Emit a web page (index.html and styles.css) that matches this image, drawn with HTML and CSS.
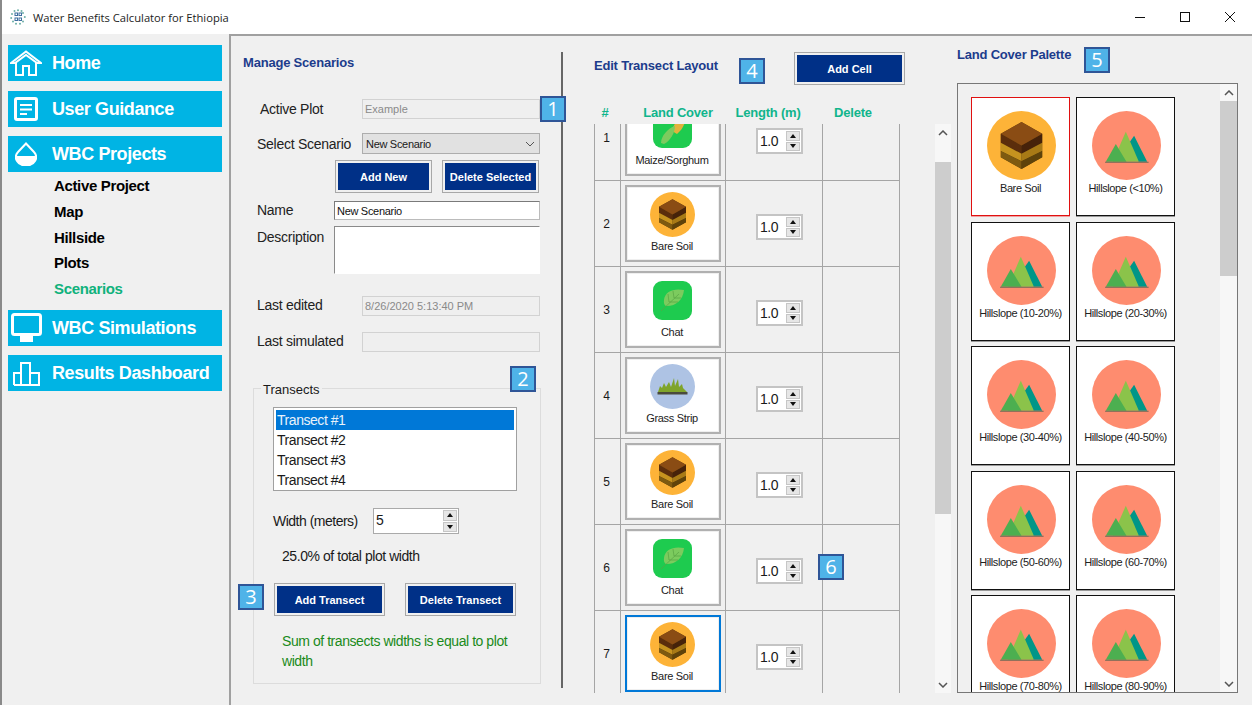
FILE: index.html
```html
<!DOCTYPE html>
<html lang="en">

<head>
    <meta charset="UTF-8">
    <title>Water Benefits Calculator for Ethiopia</title>
    <link rel="stylesheet" href="styles.css">
</head>

<body>
    <svg class="defs" width="0" height="0">
        <symbol id="soil" viewBox="0 0 100 100">
            <circle cx="50" cy="50" r="50" fill="#fdb338" />
            <path d="M50 16 80 33 80 67 50 84 20 67 20 33Z" fill="#5c3d0a" />
            <path d="M20 33 50 50 50 62 20 46Z" fill="#5b2d0c" />
            <path d="M80 33 50 50 50 62 80 46Z" fill="#46220a" />
            <path d="M20 46 50 62 50 73 20 58Z" fill="#c6931f" />
            <path d="M80 46 50 62 50 73 80 58Z" fill="#a87a16" />
            <path d="M20 58 50 73 50 84 20 67Z" fill="#7e5a10" />
            <path d="M80 58 50 73 50 84 80 67Z" fill="#5f430a" />
            <path d="M50 16 80 33 50 50 20 33Z" fill="#8a4c14" />
        </symbol>
        <symbol id="hill" viewBox="0 0 100 100">
            <circle cx="50" cy="50" r="50" fill="#fe8c6f" />
            <path d="M61 36 80 73.5 67 73.5 54 46Z" fill="#009688" />
            <path d="M49 30 68 73.5 30 73.5Z" fill="#8bc34a" />
            <path d="M34.500 48 50 73.500 20 73.500Z" fill="#4caf50" />
            <rect x="19" y="73.500" width="63" height="1.600" fill="#7b6b58" />
        </symbol>
        <symbol id="leaf" viewBox="0 0 45 45">
            <rect x="3" y="3" width="39" height="39" rx="9" fill="#1ecb4f" />
            <path d="M34 12C24 10 15 13 14 22 13.500 26 15 28 17 28 26 28 33 22 34 12Z" fill="#7ccb5e" />
            <path d="M11 33 29 16M19 24 18 16M19 24 28 24M24 20 23 13M24 20 31 20" fill="none" stroke="#58a544" stroke-width=".7" />
        </symbol>
        <symbol id="corn" viewBox="0 0 45 45">
            <rect x="3" y="3" width="39" height="39" rx="9" fill="#1ecb4f" />
            <path d="M22 25C24 17 29 11 35 8 37 15 33 23 27 28Z" fill="#e2b23c" />
            <path d="M11 37C11 30 18 22 25 20 25 27 20 35 14 38Z" fill="#7ccb5e" />
        </symbol>
        <symbol id="grass" viewBox="0 0 45 45">
            <circle cx="22.500" cy="22.500" r="22.500" fill="#aec3e4" />
            <path d="M8 28 10 22 12 24 14 19 16 23 19 18 21 23 24 14 25 22 28 15 29 23 32 20 33 24 37 28Z" fill="#7fa42a" />
            <rect x="7.500" y="28" width="30" height="2.500" fill="#4a4a3c" />
        </symbol>
    </svg>

    <header class="titlebar">
        <svg class="app-icon" viewBox="0 0 16 16">
            <g fill="none" stroke="#3f6f9f" stroke-width="1">
                <rect x="5" y="4" width="2.500" height="2.500" />
                <rect x="9" y="4" width="2.500" height="2.500" />
                <rect x="5" y="9" width="2.500" height="2.500" />
                <rect x="9" y="9" width="2.500" height="2.500" />
            </g>
            <g fill="#6fb0a8">
                <circle cx="2" cy="5" r="1" />
                <circle cx="1.200" cy="9" r="1" />
                <circle cx="3" cy="12.500" r="1" />
                <circle cx="6" cy="14.800" r="1" />
                <circle cx="10" cy="14.800" r="1" />
                <circle cx="13" cy="12.500" r="1" />
                <circle cx="14.800" cy="8" r="1" />
                <circle cx="13" cy="4" r="1" />
                <circle cx="8" cy="1.200" r="1" />
                <circle cx="4.500" cy="2" r="1" />
                <circle cx="11.500" cy="2" r="1" />
            </g>
        </svg>
        <span class="app-title">Water Benefits Calculator for Ethiopia</span>
        <div class="win-controls">
            <svg viewBox="0 0 12 12"><path d="M1 6.500H11" stroke="#111" fill="none" /></svg>
            <svg viewBox="0 0 12 12"><rect x="1.500" y="1.500" width="9" height="9" stroke="#111" fill="none" /></svg>
            <svg viewBox="0 0 12 12"><path d="M1 1 11 11M11 1 1 11" stroke="#111" fill="none" /></svg>
        </div>
    </header>

    <div class="app">
        <nav class="sidebar">
            <a class="nav-item">
                <span class="nav-icon">
                    <svg width="32" height="26" viewBox="0 0 32 26" fill="none" stroke="#fff" stroke-width="2">
                        <path d="M1 13 16 1.500 31 13 27 13 16 5 5 13Z" />
                        <path d="M6 13V25H13V16H19V25H26V13" />
                    </svg>
                </span>
                Home
            </a>
            <a class="nav-item">
                <span class="nav-icon">
                    <svg width="24" height="24" viewBox="0 0 24 24" fill="none" stroke="#fff" stroke-width="3">
                        <rect x="1.500" y="1.500" width="21" height="21" rx="1.500" />
                        <path d="M6 8H18M6 12.500H18M6 17H13" stroke-width="2" />
                    </svg>
                </span>
                User Guidance
            </a>
            <a class="nav-item">
                <span class="nav-icon">
                    <svg width="22" height="24" viewBox="0 0 22 24">
                        <path d="M11 1.500 3 10C0 13 0.500 17 2 19 4 22.500 7 23.500 11 23.500 15 23.500 18 22.500 20 19 21.500 17 22 13 19 10Z" fill="none" stroke="#fff" stroke-width="2" />
                        <path d="M1 14H21C21.500 19 17 24 11 24 5 24 .5 19 1 14Z" fill="#fff" />
                    </svg>
                </span>
                WBC Projects
            </a>
            <ul class="subnav">
                <li>Active Project</li>
                <li>Map</li>
                <li>Hillside</li>
                <li>Plots</li>
                <li class="current">Scenarios</li>
            </ul>
            <a class="nav-item">
                <span class="nav-icon">
                    <svg width="31" height="29" viewBox="0 0 31 29">
                        <rect x="1.500" y="1.500" width="28" height="20" rx="2" fill="none" stroke="#fff" stroke-width="3" />
                        <rect x="9" y="23" width="13" height="6" fill="#fff" />
                    </svg>
                </span>
                WBC Simulations
            </a>
            <a class="nav-item">
                <span class="nav-icon">
                    <svg width="27" height="25" viewBox="0 0 27 25" fill="none" stroke="#fff" stroke-width="2">
                        <path d="M1 24V12H8V24M8 24V2H17V24M17 24V12H26V24H1" />
                    </svg>
                </span>
                Results Dashboard
            </a>
        </nav>

        <main class="workspace">
            <section class="scenarios">
                <h2 class="pane-title scenarios-title">Manage Scenarios</h2>

                <div class="row row-plot">
                    <label class="label label-wide label-indent">Active Plot</label>
                    <div class="input input-off">Example</div>
                </div>
                <div class="row row-select">
                    <label class="label label-wide">Select Scenario</label>
                    <div class="select">New Scenario
                        <svg width="10" height="6" viewBox="0 0 10 6"><path d="M1 1 5 5 9 1" fill="none" stroke="#555" /></svg>
                    </div>
                </div>
                <div class="row row-actions">
                    <button class="btn btn-small">Add New</button>
                    <button class="btn btn-small">Delete Selected</button>
                </div>
                <div class="row row-name">
                    <label class="label label-narrow">Name</label>
                    <div class="input input-edit">New Scenario</div>
                </div>
                <div class="row row-desc">
                    <label class="label label-narrow">Description</label>
                    <div class="input input-edit input-area"></div>
                </div>
                <div class="row row-edited">
                    <label class="label label-wide">Last edited</label>
                    <div class="input input-off">8/26/2020 5:13:40 PM</div>
                </div>
                <div class="row row-simulated">
                    <label class="label label-wide">Last simulated</label>
                    <div class="input input-off"></div>
                </div>

                <div class="group">
                    <span class="group-title">Transects</span>
                    <ul class="listbox">
                        <li class="selected">Transect #1</li>
                        <li>Transect #2</li>
                        <li>Transect #3</li>
                        <li>Transect #4</li>
                    </ul>
                    <div class="width-row">
                        <span class="width-label">Width (meters)</span>
                        <div class="spinner spinner-wide">
                            <span class="spinner-value">5</span>
                            <span class="spinner-btns"><i class="up"></i><i class="down"></i></span>
                        </div>
                    </div>
                    <p class="share">25.0% of total plot width</p>
                    <div class="group-actions">
                        <button class="btn btn-large">Add Transect</button>
                        <button class="btn btn-large">Delete Transect</button>
                    </div>
                    <p class="status">Sum of transects widths is equal to plot width</p>
                </div>
            </section>

            <div class="divider"></div>

            <section class="layout">
                <div class="layout-head">
                    <h2 class="pane-title layout-title">Edit Transect Layout</h2>
                    <button class="btn btn-large">Add Cell</button>
                </div>
                <div class="col-heads">
                    <span>#</span>
                    <span>Land Cover</span>
                    <span>Length (m)</span>
                    <span>Delete</span>
                </div>
                <div class="table-area">
                    <div class="cells">
                        <div class="cells-inner">
                            <div class="cell-row">
                                <div class="cell-num">1</div>
                                <div class="cell-cover"><div class="cover-card"><svg><use href="#corn" /></svg><span>Maize/Sorghum</span></div></div>
                                <div class="cell-len"><div class="spinner"><span class="spinner-value">1.0</span><span class="spinner-btns"><i class="up"></i><i class="down"></i></span></div></div>
                                <div class="cell-del"></div>
                            </div>
                            <div class="cell-row">
                                <div class="cell-num">2</div>
                                <div class="cell-cover"><div class="cover-card"><svg><use href="#soil" /></svg><span>Bare Soil</span></div></div>
                                <div class="cell-len"><div class="spinner"><span class="spinner-value">1.0</span><span class="spinner-btns"><i class="up"></i><i class="down"></i></span></div></div>
                                <div class="cell-del"></div>
                            </div>
                            <div class="cell-row">
                                <div class="cell-num">3</div>
                                <div class="cell-cover"><div class="cover-card"><svg><use href="#leaf" /></svg><span>Chat</span></div></div>
                                <div class="cell-len"><div class="spinner"><span class="spinner-value">1.0</span><span class="spinner-btns"><i class="up"></i><i class="down"></i></span></div></div>
                                <div class="cell-del"></div>
                            </div>
                            <div class="cell-row">
                                <div class="cell-num">4</div>
                                <div class="cell-cover"><div class="cover-card"><svg><use href="#grass" /></svg><span>Grass Strip</span></div></div>
                                <div class="cell-len"><div class="spinner"><span class="spinner-value">1.0</span><span class="spinner-btns"><i class="up"></i><i class="down"></i></span></div></div>
                                <div class="cell-del"></div>
                            </div>
                            <div class="cell-row">
                                <div class="cell-num">5</div>
                                <div class="cell-cover"><div class="cover-card"><svg><use href="#soil" /></svg><span>Bare Soil</span></div></div>
                                <div class="cell-len"><div class="spinner"><span class="spinner-value">1.0</span><span class="spinner-btns"><i class="up"></i><i class="down"></i></span></div></div>
                                <div class="cell-del"></div>
                            </div>
                            <div class="cell-row">
                                <div class="cell-num">6</div>
                                <div class="cell-cover"><div class="cover-card"><svg><use href="#leaf" /></svg><span>Chat</span></div></div>
                                <div class="cell-len"><div class="spinner"><span class="spinner-value">1.0</span><span class="spinner-btns"><i class="up"></i><i class="down"></i></span></div></div>
                                <div class="cell-del"></div>
                            </div>
                            <div class="cell-row">
                                <div class="cell-num">7</div>
                                <div class="cell-cover"><div class="cover-card focused"><svg><use href="#soil" /></svg><span>Bare Soil</span></div></div>
                                <div class="cell-len"><div class="spinner"><span class="spinner-value">1.0</span><span class="spinner-btns"><i class="up"></i><i class="down"></i></span></div></div>
                                <div class="cell-del"></div>
                            </div>
                        </div>
                    </div>
                    <div class="scrollbar scrollbar-table">
                        <svg class="arrow" viewBox="0 0 10 6"><path d="M1 5 5 1 9 5" /></svg>
                        <div class="thumb"></div>
                        <svg class="arrow arrow-end" viewBox="0 0 10 6"><path d="M1 1 5 5 9 1" /></svg>
                    </div>
                </div>
            </section>

            <section class="palette">
                <h2 class="pane-title palette-title">Land Cover Palette</h2>
                <div class="palette-box">
                    <div class="palette-grid">
                        <div class="tile picked"><svg class="tile-icon"><use href="#soil" /></svg><span>Bare Soil</span></div>
                        <div class="tile"><svg class="tile-icon"><use href="#hill" /></svg><span>Hillslope (&lt;10%)</span></div>
                        <div class="tile"><svg class="tile-icon"><use href="#hill" /></svg><span>Hillslope (10-20%)</span></div>
                        <div class="tile"><svg class="tile-icon"><use href="#hill" /></svg><span>Hillslope (20-30%)</span></div>
                        <div class="tile"><svg class="tile-icon"><use href="#hill" /></svg><span>Hillslope (30-40%)</span></div>
                        <div class="tile"><svg class="tile-icon"><use href="#hill" /></svg><span>Hillslope (40-50%)</span></div>
                        <div class="tile"><svg class="tile-icon"><use href="#hill" /></svg><span>Hillslope (50-60%)</span></div>
                        <div class="tile"><svg class="tile-icon"><use href="#hill" /></svg><span>Hillslope (60-70%)</span></div>
                        <div class="tile"><svg class="tile-icon"><use href="#hill" /></svg><span>Hillslope (70-80%)</span></div>
                        <div class="tile"><svg class="tile-icon"><use href="#hill" /></svg><span>Hillslope (80-90%)</span></div>
                    </div>
                    <div class="scrollbar scrollbar-palette">
                        <svg class="arrow" viewBox="0 0 10 6"><path d="M1 5 5 1 9 5" /></svg>
                        <div class="thumb"></div>
                        <svg class="arrow arrow-end" viewBox="0 0 10 6"><path d="M1 1 5 5 9 1" /></svg>
                    </div>
                </div>
            </section>

            <!-- numbered callouts sit on top of the screen -->
            <span class="badge badge-1">1</span>
            <span class="badge badge-2">2</span>
            <span class="badge badge-3">3</span>
            <span class="badge badge-4">4</span>
            <span class="badge badge-5">5</span>
            <span class="badge badge-6">6</span>
        </main>
    </div>
</body>

</html>
```

FILE: styles.css
```css
* {
    box-sizing: border-box;
}

html,
body {
    margin: 0;
    height: 705px;
    overflow: hidden;
}

body {
    font-family: "Liberation Sans", Arial, sans-serif;
    font-size: 14px;
    color: #1a1a1a;
    background-color: #f0f0f0;
    border-left: 2px solid #8a8a8a;
}

.defs {
    position: absolute;
}

ul {
    list-style: none;
    margin: 0;
    padding: 0;
}

/* title bar */
.titlebar {
    display: flex;
    align-items: center;
    height: 34px;
    padding-left: 8px;
    background-color: #fff;
}

.app-icon {
    width: 16px;
    height: 16px;
}

.app-title {
    margin-left: 7px;
    font-family: "Open Sans", sans-serif;
    font-size: 11.2px;
    color: #222;
}

.win-controls {
    display: flex;
    gap: 33px;
    margin-left: auto;
    margin-right: 16px;
}

.win-controls svg {
    width: 12px;
    height: 12px;
}

.app {
    display: flex;
    height: 671px;
}

/* sidebar */
.sidebar {
    width: 227px;
    flex: none;
    display: flex;
    flex-direction: column;
    gap: 9.5px;
    padding: 11px 0 0 6px;
}

.nav-item {
    display: flex;
    align-items: center;
    width: 214px;
    height: 36px;
    padding-top: 1px;
    background-color: #00b4e4;
    color: #fff;
    font-size: 18px;
    font-weight: bold;
    letter-spacing: -.4px;
    white-space: nowrap;
}

.nav-icon {
    display: flex;
    justify-content: center;
    width: 36px;
    margin: -1px 8px 0 0;
}

.subnav {
    margin: -9.5px 0 -1.5px;
    padding: 1px 0 0 46px;
    font-size: 15px;
    font-weight: bold;
    letter-spacing: -.35px;
    line-height: 25.75px;
    color: #000;
}

.subnav .current {
    color: #10b27c;
}

/* main area */
.workspace {
    position: relative;
    flex: 1;
    display: flex;
    border-top: 2px solid #a0a0a0;
    border-left: 2px solid #a0a0a0;
}

.pane-title {
    margin: 0;
    font-size: 13px;
    font-weight: bold;
    letter-spacing: -.2px;
    color: #1c3c8c;
}

.scenarios {
    width: 330px;
    flex: none;
}

.scenarios-title {
    margin: 19px 0 0 12px;
    height: 16px;
    line-height: 16px;
}

.row {
    display: flex;
    align-items: center;
    padding-left: 26px;
    width: 309px;
}

.row-plot {
    margin-top: 28px;
    height: 20px;
}

.row-select {
    margin-top: 14px;
    height: 21px;
}

.row-actions {
    margin-top: 6px;
    height: 33px;
    gap: 10px;
    padding-left: 104px;
}

.row-name {
    margin-top: 8px;
    height: 19px;
}

.row-desc {
    margin-top: 6px;
    height: 48px;
    align-items: flex-start;
}

.row-desc .label {
    padding-top: 3px;
}

.row-edited {
    margin-top: 22px;
    height: 20px;
}

.row-simulated {
    margin-top: 16px;
    height: 20px;
}

.row-name .label,
.row-edited .label,
.row-simulated .label {
    margin-bottom: 2px;
}

.label {
    flex: none;
    letter-spacing: -.27px;
    color: #222;
}

.label-wide {
    width: 105px;
}

.label-narrow {
    width: 77px;
}

.label-indent {
    padding-left: 3px;
}

.input {
    flex: 1;
    height: 100%;
    padding-left: 2px;
    display: flex;
    align-items: center;
    font-size: 11px;
    letter-spacing: -.3px;
}

.input-off {
    border: 1px solid #d2d2d2;
    background-color: #efefef;
    color: #8a8a8a;
    letter-spacing: 0;
}

.input-edit {
    border: 1px solid #7a7a7a;
    border-bottom-color: #bbb;
    border-right-color: #bbb;
    background-color: #fff;
    color: #111;
}

.input-area {
    border: 1px solid #fff;
    border-top-color: #8a8a8a;
    border-left-color: #8a8a8a;
}

.select {
    flex: 1;
    height: 100%;
    display: flex;
    align-items: center;
    justify-content: space-between;
    padding: 0 4px 0 3px;
    font-size: 11px;
    letter-spacing: -.3px;
    background-color: #e1e1e1;
    border: 1px solid #adadad;
}

.btn {
    flex: none;
    height: 33px;
    padding: 0;
    border: 3px solid #f0f0f0;
    outline: 1px solid #a8a8a8;
    outline-offset: -1px;
    background-color: #003087;
    background-clip: padding-box;
    box-shadow: inset 0 0 0 1px #003087;
    color: #fff;
    font-family: inherit;
    font-size: 11px;
    font-weight: bold;
}

.btn-small {
    width: 97px;
}

.btn-large {
    width: 111px;
}

/* transects group */
.group {
    margin: 36px 0 0 22px;
    width: 288px;
    height: 296px;
    padding: 0 0 0 19px;
    border: 1px solid #dcdcdc;
}

.group-title {
    display: block;
    width: max-content;
    height: 16px;
    margin: -7px 0 0 -12px;
    padding: 0 2px;
    line-height: 16px;
    font-size: 13px;
    background-color: #f0f0f0;
}

.listbox {
    width: 244px;
    height: 84px;
    margin-top: 9px;
    padding: 2px;
    border: 1px solid #a0a0a0;
    background-color: #fff;
    letter-spacing: -.45px;
    line-height: 20px;
}

.listbox li {
    height: 20px;
    padding-left: 1px;
}

.listbox .selected {
    background-color: #0078d7;
    color: #e8f2fb;
}

.width-row {
    display: flex;
    align-items: center;
    margin-top: 17px;
}

.width-label {
    width: 100px;
    letter-spacing: -.5px;
}

.share {
    margin: 14px 0 0 9px;
    height: 16px;
    line-height: 16px;
    letter-spacing: -.44px;
}

.group-actions {
    display: flex;
    gap: 20px;
    margin: 19px 0 0 1px;
}

.status {
    margin: 15px 0 0 9px;
    width: 240px;
    line-height: 20px;
    letter-spacing: -.44px;
    color: #1a8a1a;
}

/* number spinners */
.spinner {
    display: flex;
    justify-content: space-between;
    width: 47px;
    height: 26px;
    padding: 1px;
    border: 2px solid #c4c4c4;
    background-color: #fff;
}

.spinner-wide {
    width: 86px;
    border-width: 1px;
    border-color: #aaa;
}

.spinner-value {
    padding-left: 1px;
    font-size: 14px;
    letter-spacing: -.5px;
    line-height: 20px;
}

.spinner-btns {
    display: flex;
    flex-direction: column;
    gap: 1px;
    width: 14px;
}

.spinner-btns i {
    flex: 1;
    display: flex;
    align-items: center;
    justify-content: center;
    background-color: #e6e6e6;
    border: 1px solid #c6c6c6;
}

.spinner-btns i::after {
    content: "";
    border-left: 3px solid transparent;
    border-right: 3px solid transparent;
}

.spinner-btns .up::after {
    border-bottom: 4px solid #111;
}

.spinner-btns .down::after {
    border-top: 4px solid #111;
}

.divider {
    flex: none;
    width: 2px;
    margin: 16px 0 17px;
    background-color: #666;
}

/* transect layout */
.layout {
    width: 394px;
    flex: none;
    padding-left: 31px;
}

.layout-head {
    display: flex;
    align-items: center;
    justify-content: space-between;
    width: 311px;
    height: 33px;
    margin-top: 16px;
}

.layout-title {
    margin-bottom: 6px;
}

.col-heads {
    display: grid;
    grid-template-columns: 22px 114px 76px 94px;
    margin-top: 19px;
    height: 20px;
    font-size: 13px;
    font-weight: bold;
    letter-spacing: -.2px;
    line-height: 17px;
    text-align: center;
    color: #10b58c;
}

.col-heads span:nth-child(2) {
    padding-left: 10px;
}

.table-area {
    display: flex;
    height: 569px;
}

.cells {
    width: 306px;
    overflow: hidden;
}

.cells-inner {
    margin-top: -29px;
}

.cell-row {
    display: grid;
    grid-template-columns: 26px 105px 97px 78px;
    height: 86px;
    border-bottom: 1px solid #a5a5a5;
}

.cell-row>div {
    border-left: 1px solid #a5a5a5;
}

.cell-del {
    border-right: 1px solid #a5a5a5;
}

.cell-num {
    display: flex;
    align-items: center;
    justify-content: center;
    font-size: 12px;
    padding: 0 2px 0 0;
}

.cell-cover {
    padding: 4px 0 0 4px;
}

.cover-card {
    display: flex;
    flex-direction: column;
    align-items: center;
    width: 96px;
    height: 77px;
    padding: 5px 2px 0 0;
    border: 2px solid #b0b0b0;
    box-shadow: inset 0 0 0 1px #efefef;
    background-color: #fff;
}

.cover-card svg {
    display: block;
    width: 45px;
    height: 45px;
}

.cover-card span {
    margin-top: 2px;
    font-size: 11px;
    letter-spacing: -.3px;
    line-height: 14px;
    color: #222;
}

.cover-card.focused {
    border-color: #0078d7;
}

.cell-len {
    padding: 33px 0 0 30px;
}

/* scrollbars */
.scrollbar {
    position: relative;
    display: flex;
    flex-direction: column;
    align-items: center;
    background-color: #f7f7f7;
}

.scrollbar-table {
    width: 16px;
    margin-left: 35px;
    height: 100%;
}

.thumb {
    background-color: #cdcdcd;
    width: 100%;
}

.scrollbar-table .thumb {
    height: 352px;
    margin-top: 26px;
}

.arrow {
    width: 10px;
    height: 6px;
    margin-top: 6px;
    flex: none;
}

.arrow path {
    fill: none;
    stroke: #555;
    stroke-width: 1.5;
}

.arrow-end {
    margin-top: auto;
    margin-bottom: 5px;
}

/* palette */
.palette {
    flex: 1;
}

.palette-title {
    margin-top: 11px;
    height: 16px;
    line-height: 16px;
}

.palette-box {
    display: flex;
    width: 281px;
    height: 610px;
    margin-top: 20px;
    border: 1px solid #777;
    overflow: hidden;
}

.palette-grid {
    display: grid;
    grid-template-columns: 99px 99px;
    grid-auto-rows: 119px;
    column-gap: 6px;
    row-gap: 5.6px;
    width: 263px;
    padding: 13px 0 0 13px;
}

.tile {
    display: flex;
    flex-direction: column;
    align-items: center;
    padding-top: 13px;
    border: 1px solid #111;
    box-shadow: 0 1px 0 #999;
    background-color: #fff;
}

.tile.picked {
    border-color: #e01010;
    box-shadow: 0 1px 0 #f0a0a0;
}

.tile-icon {
    display: block;
    flex: none;
    width: 69px;
    height: 69px;
    margin-left: 2px;
}

.tile span {
    margin-top: 1px;
    font-size: 11px;
    letter-spacing: -.4px;
    line-height: 14px;
    white-space: nowrap;
    color: #222;
}

.scrollbar-palette {
    width: 17px;
}

.scrollbar-palette .thumb {
    height: 175px;
    margin-top: 5px;
}

/* callouts */
.badge {
    position: absolute;
    width: 26px;
    height: 26px;
    border: 2px solid #2f5597;
    background-color: #4fb3e8;
    color: #fff;
    font-family: "Open Sans", sans-serif;
    font-size: 20px;
    line-height: 22px;
    text-align: center;
}

.badge-1 {
    left: 309px;
    top: 60px;
}

.badge-2 {
    left: 279px;
    top: 330px;
}

.badge-3 {
    left: 7px;
    top: 548px;
}

.badge-4 {
    left: 508px;
    top: 22px;
}

.badge-5 {
    left: 853px;
    top: 11px;
}

.badge-6 {
    left: 587px;
    top: 518px;
}
```
